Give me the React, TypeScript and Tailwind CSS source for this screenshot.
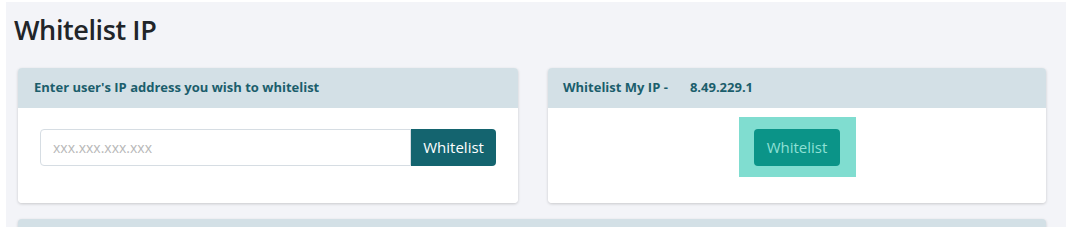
export default function App() {
  return (
    <div className="bg-white w-[1070px] h-[232px] pt-[2px] pl-[6px] font-['Open_Sans',sans-serif]">
      <div className="bg-[#f3f4f8] w-[1060px] h-[225px] overflow-hidden pl-[12px] pr-[20px]">
        <h1 className="text-[27px] leading-none font-semibold text-[#212529] pt-[14px] -ml-[4px] tracking-[-0.4px]">Whitelist IP</h1>
        <div className="flex gap-[30px] mt-[25px]">
          <div className="w-[500px] rounded-[4px] shadow-[0_1px_3px_rgba(0,0,0,0.18)] overflow-hidden">
            <div className="h-[40px] bg-[#d3e0e6] flex items-center px-[16px] text-[13px] font-bold text-[#1b5e6c]">
              Enter user's IP address you wish to whitelist
            </div>
            <div className="bg-white h-[95px] px-[22px] pt-[21px]">
              <div className="flex h-[37px]">
                <input
                  placeholder="xxx.xxx.xxx.xxx"
                  className="w-[372px] border border-[#d6dde3] rounded-l-[4px] px-[12px] text-[14px] placeholder:text-[#b8b8b8] outline-none"
                />
                <button className="w-[85px] bg-[#14646f] text-white text-[15px] rounded-r-[4px]">Whitelist</button>
              </div>
            </div>
          </div>
          <div className="w-[498px] rounded-[4px] shadow-[0_1px_3px_rgba(0,0,0,0.18)] overflow-hidden">
            <div className="h-[40px] bg-[#d3e0e6] flex items-center px-[15px] text-[13px] font-bold text-[#1b5e6c]">
              <span>Whitelist My IP -</span>
              <span className="ml-[22px]">8.49.229.1</span>
            </div>
            <div className="bg-white h-[95px] flex justify-center pt-[9px]">
              <div className="bg-[#80ddd0] w-[117px] h-[60px] flex items-center justify-center">
                <button className="w-[86px] h-[37px] bg-[#0b9488] text-[#8fe0d5] text-[15px] rounded-[4px]">Whitelist</button>
              </div>
            </div>
          </div>
        </div>
        <div className="mt-[16px] h-[20px] w-[1028px] bg-[#d3e0e6] rounded-t-[4px] shadow-[0_1px_3px_rgba(0,0,0,0.18)]" />
      </div>
    </div>
  );
}
